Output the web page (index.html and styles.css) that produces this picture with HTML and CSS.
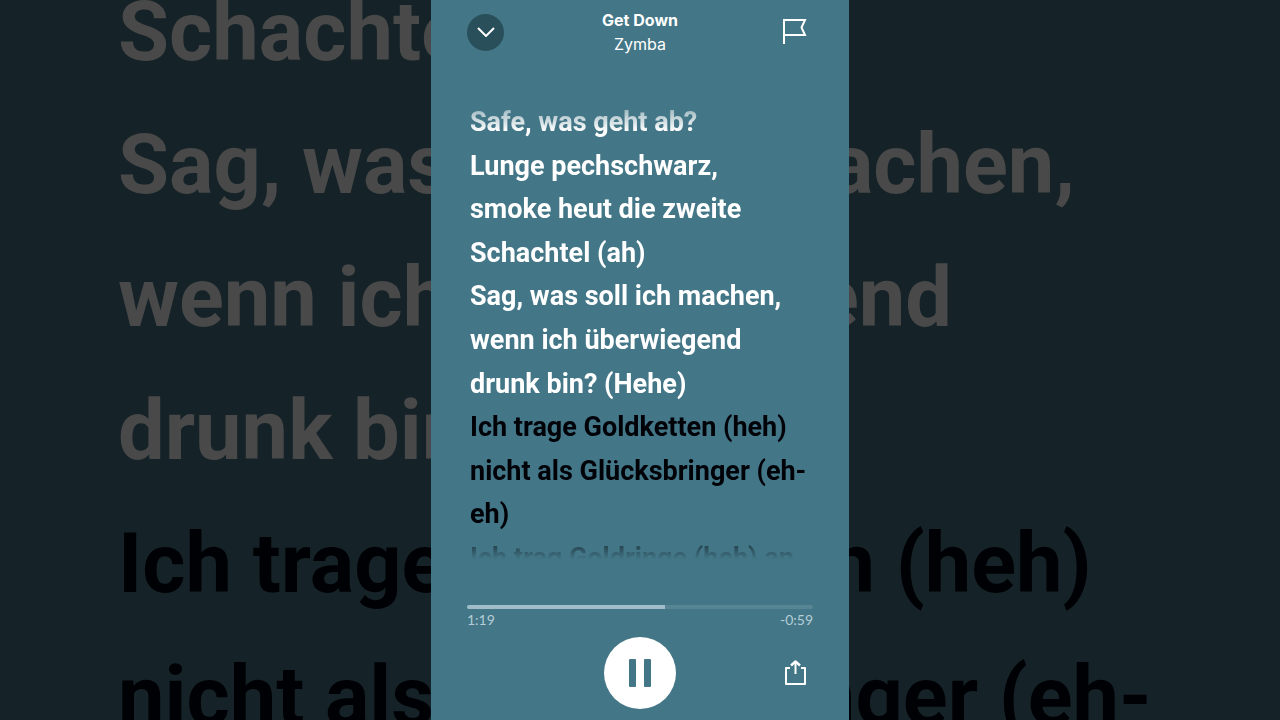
FILE: index.html
```html
<!DOCTYPE html>
<html lang="de">
<head>
<meta charset="utf-8">
<meta name="viewport" content="width=device-width, initial-scale=1">
<title>Get Down – Zymba</title>
<link rel="stylesheet" href="styles.css">
</head>
<body>
<div class="stage">
  <div class="backdrop" aria-hidden="true">
    <p class="sung">Schachtel (ah)</p>
    <p class="sung">Sag, was soll ich machen,</p>
    <p class="sung">wenn ich überwiegend</p>
    <p class="sung">drunk bin? (Hehe)</p>
    <p>Ich trage Goldketten (heh)</p>
    <p>nicht als Glücksbringer (eh-</p>
  </div>
  <main class="player">
    <header class="top">
      <button class="close" type="button" aria-label="Schließen">
        <svg width="18" height="10" viewBox="0 0 18 10"><path d="M1 1 9 9 17 1" fill="none" stroke="currentColor" stroke-width="2"/></svg>
      </button>
      <div class="track">
        <h1 class="title">Get Down</h1>
        <p class="artist">Zymba</p>
      </div>
      <button class="flag" type="button" aria-label="Melden">
        <svg width="24" height="26" viewBox="0 0 24 26"><path d="M1 25V1H22L18.500 8.500 22 16H1" fill="none" stroke="currentColor" stroke-width="2"/></svg>
      </button>
    </header>
    <section class="lyrics" aria-label="Songtext">
      <p class="sung">Safe, was geht ab?</p>
      <p class="sung">Lunge pechschwarz,</p>
      <p class="sung">smoke heut die zweite</p>
      <p class="sung">Schachtel (ah)</p>
      <p class="sung">Sag, was soll ich machen,</p>
      <p class="sung">wenn ich überwiegend</p>
      <p class="sung">drunk bin? (Hehe)</p>
      <p>Ich trage Goldketten (heh)</p>
      <p>nicht als Glücksbringer (eh-</p>
      <p>eh)</p>
      <p>Ich trag Goldringe (heh) an</p>
    </section>
    <footer class="controls">
      <progress class="bar" value="79" max="138" aria-label="Fortschritt"></progress>
      <div class="times"><span>1:19</span><span>-0:59</span></div>
      <div class="buttons">
        <button class="pause" type="button" aria-label="Pause">
          <svg width="22" height="28" viewBox="0 0 22 28" fill="currentColor"><rect width="7" height="28" rx="1"/><rect x="15" width="7" height="28" rx="1"/></svg>
        </button>
        <button class="share" type="button" aria-label="Teilen">
          <svg width="22" height="26" viewBox="0 0 22 26" fill="none" stroke="currentColor" stroke-width="2" stroke-linejoin="round"><path d="M6 8H2V24H21V8H17M11.500 14V2"/><path d="M7 5.500 11.500 1.500 16 5.500" stroke-width="2.400"/></svg>
        </button>
      </div>
    </footer>
  </main>
</div>
</body>
</html>
```
FILE: styles.css
```css
* { box-sizing: border-box; }
body, h1, p { margin: 0; }
body {
  background: #152328;
  font-family: Inter, "Liberation Sans", sans-serif;
}
button {
  padding: 0;
  border: 0;
  background: none;
  color: inherit;
  cursor: pointer;
}
svg { display: block; }

.stage {
  display: grid;
  grid-template-columns: minmax(0, 1fr);
  grid-template-rows: 100vh;
  overflow: hidden;
}
.backdrop, .player { grid-area: 1 / 1; }
.backdrop, .lyrics {
  font-family: Roboto, "Liberation Sans", sans-serif;
  font-weight: 700;
  white-space: nowrap;
}
.backdrop {
  overflow: hidden;
  padding-left: 118px;
  font-size: 83px;
  line-height: 133px;
  color: #000104;
}
.backdrop p:first-child { margin-top: -35px; }
.backdrop .sung { color: #494949; }

.player {
  justify-self: center;
  display: flex;
  flex-direction: column;
  width: min(100%, 418px);
  padding: 8px 36px 11px;
  background: #437686;
  color: #fff;
}
.top {
  display: grid;
  grid-template-columns: 37px 1fr 37px;
  align-items: center;
}
.close {
  display: grid;
  place-items: center;
  width: 37px;
  height: 37px;
  border-radius: 50%;
  background: #284f5a;
}
.flag { justify-self: center; }
.track {
  text-align: center;
  font-size: 16px;
  line-height: 24px;
}
.title { font-size: inherit; font-weight: 700; }

.lyrics {
  flex: 1;
  display: flex;
  flex-direction: column;
  justify-content: space-between;
  margin: 45px 0 26px;
  padding-left: 3px;
  font-size: 27px;
  line-height: 42px;
  color: #000208;
  -webkit-mask-image: linear-gradient(transparent -12px, #000 30px, #000 427px, transparent 458px);
  mask-image: linear-gradient(transparent -12px, #000 30px, #000 427px, transparent 458px);
}
.lyrics .sung { color: #fff; }

.bar {
  display: block;
  width: 100%;
  height: 4px;
  border: 0;
  border-radius: 2px;
  overflow: hidden;
  appearance: none;
  background: #578593;
}
.bar::-webkit-progress-bar { background: #578593; }
.bar::-webkit-progress-value { background: #a1bdc8; }
.bar::-moz-progress-bar { background: #a1bdc8; }
.times {
  display: flex;
  justify-content: space-between;
  padding-top: 1px;
  font-family: Lato, sans-serif;
  font-size: 14px;
  line-height: 20px;
  color: #b4cdd6;
}
.buttons {
  display: grid;
  grid-template-columns: 1fr 72px 1fr;
  align-items: center;
  margin-top: 7px;
}
.pause {
  grid-column: 2;
  display: grid;
  place-items: center;
  width: 72px;
  height: 72px;
  border-radius: 50%;
  background: #fff;
  color: #437686;
}
.share { justify-self: end; margin-right: 7px; }
```
